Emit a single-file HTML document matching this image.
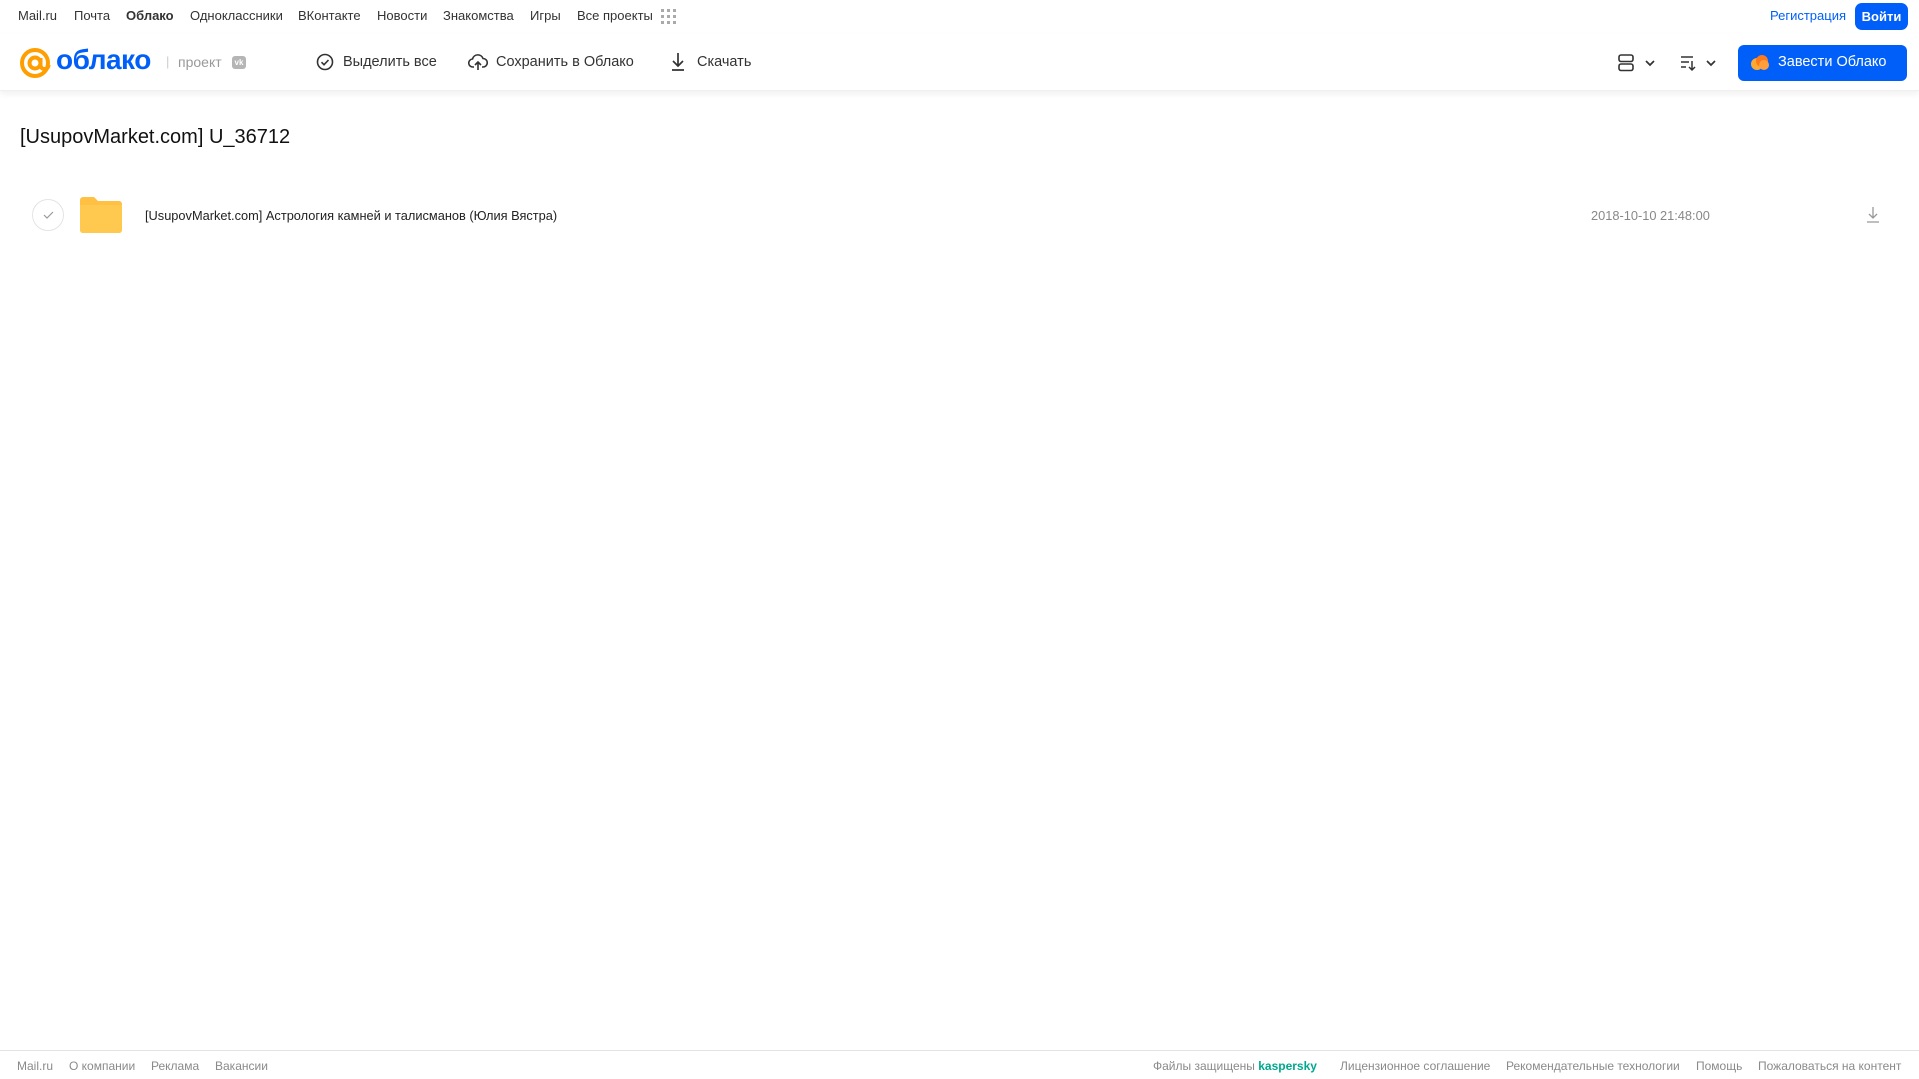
<!DOCTYPE html>
<html><head><meta charset="utf-8"><style>
*{margin:0;padding:0;box-sizing:border-box}
body{width:1919px;height:1079px;background:#fff;font-family:"Liberation Sans",sans-serif;color:#333;position:relative;overflow:hidden}
.a{position:absolute;white-space:nowrap}
.nav{top:8px;font-size:13px;color:#333}
.tb{font-size:14.5px;color:#333;top:54px}
.ft{top:1059px;font-size:12px;color:#8a8a8a}
</style></head><body>
<div class="a nav" style="left:18px">Mail.ru</div>
<div class="a nav" style="left:74px">Почта</div>
<div class="a nav" style="left:126px;font-weight:bold">Облако</div>
<div class="a nav" style="left:190px">Одноклассники</div>
<div class="a nav" style="left:298px">ВКонтакте</div>
<div class="a nav" style="left:377px">Новости</div>
<div class="a nav" style="left:443px">Знакомства</div>
<div class="a nav" style="left:530px">Игры</div>
<div class="a nav" style="left:577px">Все проекты</div>
<svg class="a" style="left:661px;top:9px" width="15" height="15"><g fill="#aaa"><rect x="0" y="0" width="3" height="3"/><rect x="6" y="0" width="3" height="3"/><rect x="12" y="0" width="3" height="3"/><rect x="0" y="6" width="3" height="3"/><rect x="6" y="6" width="3" height="3"/><rect x="12" y="6" width="3" height="3"/><rect x="0" y="12" width="3" height="3"/><rect x="6" y="12" width="3" height="3"/><rect x="12" y="12" width="3" height="3"/></g></svg>
<div class="a nav" style="left:1770px;color:#005ff9">Регистрация</div>
<div class="a" style="left:1855px;top:3px;width:53px;height:27px;background:#005ff9;border-radius:7px;color:#fff;font-size:13px;font-weight:bold;text-align:center;line-height:27px">Войти</div>

<div class="a" style="left:0;top:34px;width:1919px;height:57px;box-shadow:0 3px 6px rgba(0,0,0,0.06);border-bottom:1px solid #f0f0f0"></div>
<svg class="a" style="left:18px;top:46px" width="34" height="34"><circle cx="17" cy="17" r="13" fill="none" stroke="#ff9e00" stroke-width="4"/><circle cx="17" cy="17" r="5.5" fill="none" stroke="#ff9e00" stroke-width="4"/><path d="M22.5 12v7a4 4 0 0 0 8 0" fill="none" stroke="#ff9e00" stroke-width="4"/></svg>
<div class="a" style="left:56px;top:44px;font-size:28px;font-weight:bold;color:#005ff9;letter-spacing:-0.5px">облако</div>
<div class="a" style="left:166px;top:54px;font-size:13px;color:#ccc">|</div>
<div class="a" style="left:178px;top:54px;font-size:14px;color:#999">проект</div>
<div class="a" style="left:232px;top:56px;width:14px;height:13px;background:#b5b5b5;border-radius:3px;color:#fff;font-size:8px;text-align:center;line-height:13px;font-weight:bold">vk</div>
<svg class="a" style="left:316px;top:53px" width="18" height="18"><circle cx="9" cy="9" r="7.5" fill="none" stroke="#333" stroke-width="1.6"/><path d="M5.5 9.2l2.5 2.5 4.5-4.7" fill="none" stroke="#333" stroke-width="1.6"/></svg>
<div class="a tb" style="left:343px">Выделить все</div>
<svg class="a" style="left:468px;top:53px" width="20" height="18"><path d="M6 14H5a4 4 0 0 1-.5-8A5.5 5.5 0 0 1 15 5.5 4 4 0 0 1 15 14h-1" fill="none" stroke="#333" stroke-width="1.6"/><path d="M10 17V9m-3 3l3-3 3 3" fill="none" stroke="#333" stroke-width="1.6"/></svg>
<div class="a tb" style="left:496px">Сохранить в Облако</div>
<svg class="a" style="left:670px;top:52px" width="16" height="20"><path d="M8 1v13M3 9l5 5 5-5M2 18h12" fill="none" stroke="#333" stroke-width="1.7"/></svg>
<div class="a tb" style="left:697px">Скачать</div>
<svg class="a" style="left:1618px;top:54px" width="44" height="18"><rect x="1" y="1" width="14" height="6.5" rx="2" fill="none" stroke="#333" stroke-width="1.6"/><rect x="1" y="10" width="14" height="6.5" rx="2" fill="none" stroke="#333" stroke-width="1.6"/><path d="M28 7l4 4 4-4" fill="none" stroke="#333" stroke-width="1.7"/></svg>
<svg class="a" style="left:1680px;top:54px" width="44" height="18"><path d="M1 3h12M1 8h8M1 13h5M12 7v9m-3-3l3 3 3-3" fill="none" stroke="#333" stroke-width="1.5"/><path d="M27 7l4 4 4-4" fill="none" stroke="#333" stroke-width="1.7"/></svg>
<div class="a" style="left:1738px;top:45px;width:169px;height:36px;background:#005ff9;border-radius:6px"></div>
<svg class="a" style="left:1750px;top:53px" width="20" height="18"><circle cx="7" cy="11" r="6" fill="#ffa930"/><circle cx="12" cy="8" r="6" fill="#ff7a1a"/><circle cx="14" cy="12" r="5" fill="#ff9e3a"/></svg>
<div class="a" style="left:1778px;top:54px;font-size:14.5px;color:#fff">Завести Облако</div>

<div class="a" style="left:20px;top:126px;font-size:20px;color:#111">[UsupovMarket.com] U_36712</div>
<div class="a" style="left:32px;top:199px;width:32px;height:32px;border:1px solid #e4e4e4;border-radius:50%"></div>
<svg class="a" style="left:43px;top:210px" width="12" height="10"><path d="M1 5l3 3 6-6" fill="none" stroke="#999" stroke-width="1.2"/></svg>
<svg class="a" style="left:80px;top:197px" width="42" height="36"><path d="M0 3a3 3 0 0 1 3-3h11l4 4h21a3 3 0 0 1 3 3v26a3 3 0 0 1-3 3H3a3 3 0 0 1-3-3z" fill="#ffc044"/><path d="M0 8h42v25a3 3 0 0 1-3 3H3a3 3 0 0 1-3-3z" fill="#ffc94f"/></svg>
<div class="a" style="left:145px;top:208px;font-size:12.8px;color:#222">[UsupovMarket.com] Астрология камней и талисманов (Юлия Вястра)</div>
<div class="a" style="left:1591px;top:208px;font-size:12.8px;color:#888">2018-10-10 21:48:00</div>
<svg class="a" style="left:1866px;top:206px" width="14" height="18"><path d="M7 1v11M3 8l4 4 4-4M1 16h12" fill="none" stroke="#999" stroke-width="1.3"/></svg>

<div class="a" style="left:0;top:1050px;width:1919px;height:1px;background:#e4e4e4"></div>
<div class="a ft" style="left:17px">Mail.ru</div>
<div class="a ft" style="left:69px">О компании</div>
<div class="a ft" style="left:151px">Реклама</div>
<div class="a ft" style="left:215px">Вакансии</div>
<div class="a ft" style="left:1153px">Файлы защищены <b style="color:#00a88e">kaspersky</b></div>
<div class="a ft" style="left:1340px">Лицензионное соглашение</div>
<div class="a ft" style="left:1506px">Рекомендательные технологии</div>
<div class="a ft" style="left:1696px">Помощь</div>
<div class="a ft" style="left:1758px">Пожаловаться на контент</div>
</body></html>
